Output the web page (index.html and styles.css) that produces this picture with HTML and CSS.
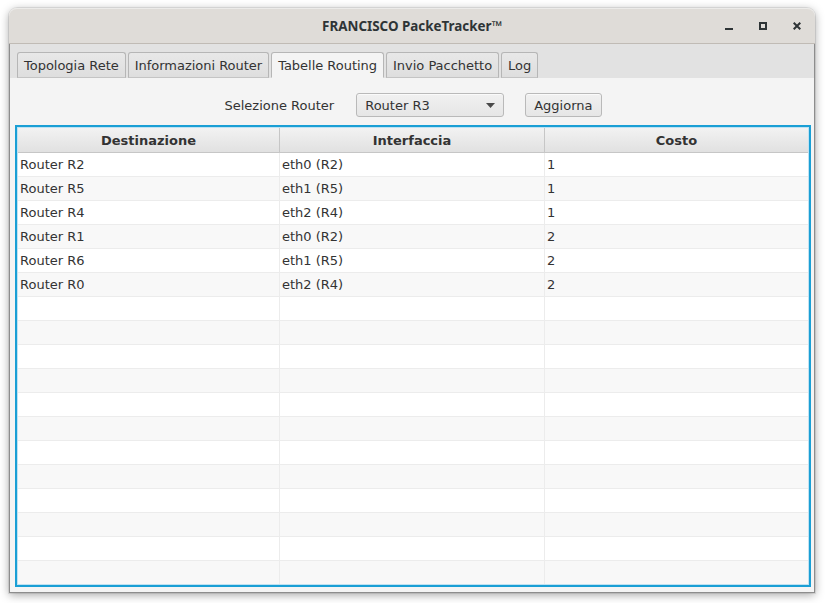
FILE: index.html
```html
<!DOCTYPE html>
<html>
<head>
<meta charset="utf-8">
<link rel="stylesheet" href="styles.css">
</head>
<body>
<div class="desktop">
  <div class="window">
    <div class="titlebar">
      <div></div>
      <div class="title">FRANCISCO PackeTracker™</div>
      <div class="controls">
        <div class="ctl"><svg width="8" height="8" viewBox="0 0 8 8"><rect x="0" y="6" width="8" height="2" fill="#2e3436"/></svg></div>
        <div class="ctl"><svg width="8" height="8" viewBox="0 0 8 8"><rect x="1" y="1" width="6" height="6" fill="none" stroke="#2e3436" stroke-width="2"/></svg></div>
        <div class="ctl"><svg width="8" height="8" viewBox="0 0 8 8"><path d="M0.7 0.7 L7.3 7.3 M7.3 0.7 L0.7 7.3" stroke="#2e3436" stroke-width="2" fill="none"/></svg></div>
      </div>
    </div>
    <div class="body">
      <div class="tabbar">
        <div class="tab">Topologia Rete</div>
        <div class="tab">Informazioni Router</div>
        <div class="tab selected">Tabelle Routing</div>
        <div class="tab">Invio Pacchetto</div>
        <div class="tab">Log</div>
      </div>
      <div class="content">
        <div class="toolbar">
          <span class="label">Selezione Router</span>
          <div class="combo"><span>Router R3</span><svg width="9" height="5" viewBox="0 0 9 5"><path d="M0 0 H9 L4.5 5 Z" fill="#4a4a4a"/></svg></div>
          <div class="button">Aggiorna</div>
        </div>
        <div class="table">
          <div class="thead">
            <div class="th">Destinazione</div>
            <div class="th">Interfaccia</div>
            <div class="th">Costo</div>
          </div>
          <div class="tbody">
            <div class="tr"><div class="td">Router R2</div><div class="td">eth0 (R2)</div><div class="td">1</div></div>
            <div class="tr"><div class="td">Router R5</div><div class="td">eth1 (R5)</div><div class="td">1</div></div>
            <div class="tr"><div class="td">Router R4</div><div class="td">eth2 (R4)</div><div class="td">1</div></div>
            <div class="tr"><div class="td">Router R1</div><div class="td">eth0 (R2)</div><div class="td">2</div></div>
            <div class="tr"><div class="td">Router R6</div><div class="td">eth1 (R5)</div><div class="td">2</div></div>
            <div class="tr"><div class="td">Router R0</div><div class="td">eth2 (R4)</div><div class="td">2</div></div>
            <div class="tr"><div class="td"></div><div class="td"></div><div class="td"></div></div>
            <div class="tr"><div class="td"></div><div class="td"></div><div class="td"></div></div>
            <div class="tr"><div class="td"></div><div class="td"></div><div class="td"></div></div>
            <div class="tr"><div class="td"></div><div class="td"></div><div class="td"></div></div>
            <div class="tr"><div class="td"></div><div class="td"></div><div class="td"></div></div>
            <div class="tr"><div class="td"></div><div class="td"></div><div class="td"></div></div>
            <div class="tr"><div class="td"></div><div class="td"></div><div class="td"></div></div>
            <div class="tr"><div class="td"></div><div class="td"></div><div class="td"></div></div>
            <div class="tr"><div class="td"></div><div class="td"></div><div class="td"></div></div>
            <div class="tr"><div class="td"></div><div class="td"></div><div class="td"></div></div>
            <div class="tr"><div class="td"></div><div class="td"></div><div class="td"></div></div>
            <div class="tr"><div class="td"></div><div class="td"></div><div class="td"></div></div>
            <div class="tr"><div class="td"></div><div class="td"></div><div class="td"></div></div>
          </div>
        </div>
      </div>
    </div>
  </div>
</div>
</body>
</html>
```
FILE: styles.css
```css
* { box-sizing: border-box; }
html, body { margin: 0; padding: 0; background: #ffffff; }
body { width: 825px; height: 603px; overflow: hidden; font-family: "DejaVu Sans", sans-serif; font-size: 13px; color: #333333; }

.desktop { padding: 8px 0 0 9px; }

.window {
  width: 806px;
  height: 585px;
  border-radius: 8px 8px 0 0;
  box-shadow: 0 2px 10px rgba(0, 0, 0, 0.35), 0 0 0 1px rgba(0,0,0,0.08);
  display: flex;
  flex-direction: column;
  background: #f4f4f4;
}

.titlebar {
  height: 36px;
  flex: none;
  display: grid;
  grid-template-columns: 1fr auto 1fr;
  align-items: center;
  background: #dfdcd8;
  border-bottom: 1px solid #c0bbb5;
  border-radius: 8px 8px 0 0;
  box-shadow: inset 0 1px 0 #ecebe9;
}
.title {
  font-family: "Noto Sans", sans-serif;
  font-weight: bold;
  font-size: 13.4px;
  color: #2e3436;
}
.controls { display: flex; justify-content: flex-end; padding-right: 1px; }
.ctl { width: 34px; height: 35px; display: flex; align-items: center; justify-content: center; }
.ctl svg { display: block; }

.body {
  flex: 1;
  min-height: 0;
  display: flex;
  flex-direction: column;
  border: 1px solid #8d8d8d;
  border-top: none;
}

.tabbar {
  height: 34px;
  flex: none;
  display: flex;
  align-items: flex-end;
  gap: 2px;
  padding-left: 7px;
  background: #e2e2e2;
}
.tab {
  height: 26px;
  padding: 0 6px 0 6px;
  display: flex;
  align-items: center;
  border: 1px solid #b6b6b6;
  border-bottom: 1px solid #c4c4c4;
  border-radius: 3px 3px 0 0;
  background: linear-gradient(#e8e8e8, #dedede);
  color: #333333;
  white-space: nowrap;
  letter-spacing: -0.02px;
}
.tab.selected {
  background: #f4f4f4;
  border-bottom-color: #f4f4f4;
}

.content {
  flex: 1;
  min-height: 0;
  display: flex;
  flex-direction: column;
  padding: 15px 3px 5px 5px;
}

.toolbar {
  height: 24px;
  flex: none;
  display: flex;
  align-items: center;
  justify-content: center;
  gap: 22px;
  padding-left: 0;
}
.label { color: #333333; }
.combo, .button {
  height: 24px;
  border: 1px solid #b9b9b9;
  border-radius: 3px;
  background: linear-gradient(#f1f1f1, #e6e6e6);
  box-shadow: inset 0 1px 0 #fafafa;
  display: flex;
  align-items: center;
}
.combo {
  width: 148px;
  padding: 0 8px 0 8px;
  justify-content: space-between;
}
.button { padding: 0 8px; margin-left: -1px; }

.table {
  margin-top: 8px;
  flex: 1;
  min-height: 0;
  border: 2px solid #1a9fd5;
  padding: 1px;
  background: #bfe2f2;
  display: flex;
  flex-direction: column;
  overflow: hidden;
}
.thead {
  height: 25px;
  flex: none;
  display: grid;
  grid-template-columns: 262px 265px 1fr;
  background: linear-gradient(#f2f2f2, #e1e1e1);
  border-bottom: 1px solid #c6c6c6;
}
.th {
  display: flex;
  align-items: center;
  justify-content: center;
  font-weight: bold;
  color: #333333;
  border-right: 1px solid #c6c6c6;
}
.th:last-child { border-right: none; }
.tbody { flex: 1; min-height: 0; overflow: hidden; background: #ffffff; }
.tr {
  height: 24px;
  display: grid;
  grid-template-columns: 262px 265px 1fr;
  border-bottom: 1px solid #ececec;
  background: #ffffff;
}
.tr:nth-child(even) { background: #f8f8f8; }
.td {
  display: flex;
  align-items: center;
  padding-left: 2px;
  border-right: 1px solid #ececec;
  color: #333333;
  white-space: nowrap;
}
.td:last-child { border-right: none; }
```
